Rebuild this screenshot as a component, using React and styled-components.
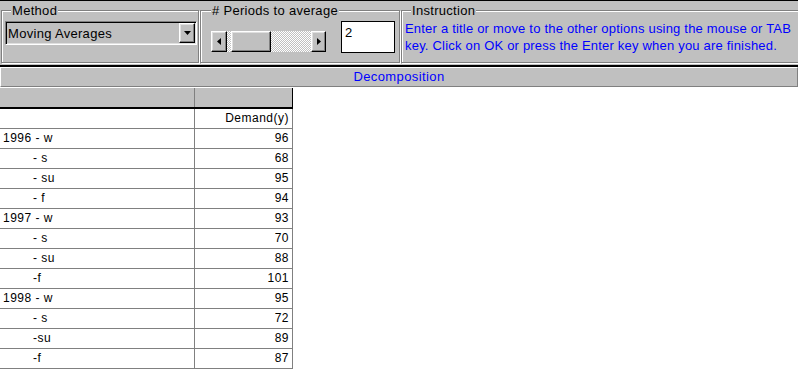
import styled, { createGlobalStyle } from "styled-components";

const GlobalStyle = createGlobalStyle`
  html, body {
    margin: 0;
    padding: 0;
    background: #fff;
  }
  body {
    font-family: "Liberation Sans", Arial, sans-serif;
  }
`;

const Window = styled.div`
  width: 798px;
  overflow: hidden;
`;

const TopPanel = styled.div`
  display: flex;
  height: 64px;
  background: #c0c0c0;
  border-top: 1px solid #000;
  border-bottom: 2px solid #000;
  padding-left: 1px;
`;

const Group = styled.fieldset`
  box-sizing: border-box;
  flex: none;
  width: ${(p) => p.$width}px;
  margin: 2px ${(p) => p.$gap || 0}px 2px 0;
  padding: 3px 0 0 ${(p) => p.$padLeft}px;
  border: 1px solid #808080;
  box-shadow: inset 1px 1px 0 #fff, 1px 1px 0 #fff;
  min-width: 0;
`;

const Legend = styled.legend`
  margin-left: ${(p) => p.$offset}px;
  padding: 0 1px;
  font-size: 13px;
  line-height: 15px;
  letter-spacing: 0.3px;
  color: #000;
  background: #c0c0c0;
`;

const Raised = styled.div`
  box-sizing: border-box;
  display: flex;
  align-items: center;
  justify-content: center;
  background: #c0c0c0;
  border: 1px solid;
  border-color: #fff #000 #000 #fff;
  box-shadow: inset -1px -1px 0 #808080, inset 1px 1px 0 #dfdfdf;
`;

const Combo = styled.div`
  box-sizing: border-box;
  width: 192px;
  height: 24px;
  display: flex;
  align-items: center;
  justify-content: space-between;
  padding: 1px 1px 1px 2px;
  background: #c0c0c0;
  border: 1px solid;
  border-color: #808080 #fff #fff #808080;
  box-shadow: inset 1px 1px 0 #000, inset -1px -1px 0 #dfdfdf;
  font-size: 13px;
  letter-spacing: 0.3px;
`;

const DropButton = styled(Raised)`
  width: 16px;
  height: 20px;
`;

const Row = styled.div`
  display: flex;
  align-items: flex-start;
`;

const ScrollBar = styled.div`
  display: flex;
  width: 115px;
  height: 21px;
  margin-top: 10px;
  background: repeating-conic-gradient(#c0c0c0 0 25%, #fff 0 50%) 0 0 / 2px 2px;
`;

const ArrowButton = styled(Raised)`
  width: ${(p) => p.$width}px;
  height: 100%;
`;

const Thumb = styled(Raised)`
  width: 40px;
  height: 100%;
  margin: 0 ${(p) => p.$after}px 0 ${(p) => p.$before}px;
`;

const NumberBox = styled.div`
  box-sizing: border-box;
  width: 54px;
  height: 32px;
  margin-left: 15px;
  padding: 3px 3px;
  background: #fff;
  border: 1px solid #000;
  font-size: 13px;
  line-height: 15px;
`;

const Instruction = styled.div`
  color: #0000ff;
  font-size: 13px;
  line-height: 17px;
  letter-spacing: 0.2px;
  white-space: nowrap;
  margin-top: -1px;
`;

const TitleBar = styled.div`
  height: 18px;
  line-height: 18px;
  text-align: center;
  color: #0000ff;
  font-size: 13px;
  letter-spacing: 0.4px;
  background: #c0c0c0;
  border-top: 1px solid #fff;
  border-left: 1px solid #fff;
  border-bottom: 1px solid #808080;
  border-right: 1px solid #808080;
`;

const Grid = styled.div`
  width: 293px;
  margin-top: 1px;
  font-size: 12px;
  letter-spacing: 0.5px;
`;

const GridRow = styled.div`
  display: grid;
  grid-template-columns: 195px 98px;
  height: ${(p) => (p.$head ? 19 : 20)}px;
  background: ${(p) => (p.$head ? "#c0c0c0" : "#fff")};
  border-bottom: ${(p) => (p.$head ? "2px solid #000" : "none")};
`;

const Cell = styled.div`
  box-sizing: border-box;
  height: 100%;
  line-height: 19px;
  white-space: pre;
  text-align: ${(p) => (p.$num ? "right" : "left")};
  padding: 0 ${(p) => (p.$num ? 3 : 0)}px 0 ${(p) => (p.$num ? 0 : p.$indent ? 33 : 3)}px;
  border-right: 1px solid ${(p) => (p.$head && p.$num ? "#000" : "#808080")};
  border-bottom: ${(p) => (p.$head ? "none" : "1px solid #808080")};
`;

const TriangleDown = () => (
  <svg width="7" height="4" viewBox="0 0 7 4">
    <polygon points="0,0 7,0 3.5,4" fill="#000" />
  </svg>
);

const TriangleSide = ({ dir }) => (
  <svg width="4" height="7" viewBox="0 0 4 7">
    <polygon points={dir === "left" ? "4,0 4,7 0,3.5" : "0,0 0,7 4,3.5"} fill="#000" />
  </svg>
);

const rows = [
  ["1996 - w", 96],
  ["- s", 68, true],
  ["- su", 95, true],
  ["- f", 94, true],
  ["1997 - w", 93],
  ["- s", 70, true],
  ["- su", 88, true],
  ["-f", 101, true],
  ["1998 - w", 95],
  ["- s", 72, true],
  ["-su", 89, true],
  ["-f", 87, true],
];

export default function App() {
  return (
    <Window>
      <GlobalStyle />
      <TopPanel>
        <Group $width={198} $gap={1} $padLeft={3}>
          <Legend $offset={6}>Method</Legend>
          <Combo>
            <span>Moving Averages</span>
            <DropButton>
              <TriangleDown />
            </DropButton>
          </Combo>
        </Group>
        <Group $width={200} $gap={1} $padLeft={10}>
          <Legend $offset={0}>#&nbsp;Periods to average</Legend>
          <Row>
            <ScrollBar>
              <ArrowButton $width={16}>
                <TriangleSide dir="left" />
              </ArrowButton>
              <Thumb $before={4} $after={40} />
              <ArrowButton $width={15}>
                <TriangleSide dir="right" />
              </ArrowButton>
            </ScrollBar>
            <NumberBox>2</NumberBox>
          </Row>
        </Group>
        <Group $width={400} $padLeft={3}>
          <Legend $offset={6}>Instruction</Legend>
          <Instruction>
            Enter a title or move to the other options using the mouse or TAB
            <br />
            key. Click on OK or press the Enter key when you are finished.
          </Instruction>
        </Group>
      </TopPanel>
      <TitleBar>Decomposition</TitleBar>
      <Grid>
        <GridRow $head>
          <Cell $head />
          <Cell $head $num />
        </GridRow>
        <GridRow>
          <Cell />
          <Cell $num>Demand(y)</Cell>
        </GridRow>
        {rows.map(([label, value, indent], i) => (
          <GridRow key={i}>
            <Cell $indent={indent}>{label}</Cell>
            <Cell $num>{value}</Cell>
          </GridRow>
        ))}
      </Grid>
    </Window>
  );
}
